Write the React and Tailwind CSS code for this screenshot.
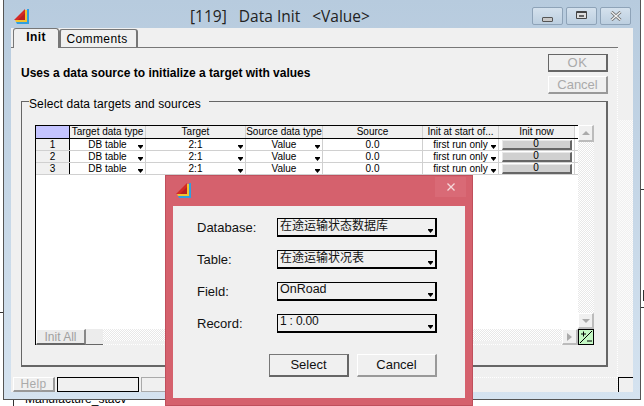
import React from 'react';

const COLS = [
  { title: 'Target data type', w: 'w-[76px]' },
  { title: 'Target', w: 'w-[100px]' },
  { title: 'Source data type', w: 'w-[77px]' },
  { title: 'Source', w: 'w-[100px]' },
  { title: 'Init at start of...', w: 'w-[76px]' },
  { title: 'Init now', w: 'w-[76px]' },
];

const ROWS = ['1', '2', '3'];

const FIELDS = [
  { label: 'Database:', value: '在途运输状态数据库', size: 'text-[12px] leading-[15px]' },
  { label: 'Table:', value: '在途运输状况表', size: 'text-[12px] leading-[15px]' },
  { label: 'Field:', value: 'OnRoad', size: 'text-[12.5px] leading-[12px]' },
  { label: 'Record:', value: '1 : 0.00', size: 'text-[12px] leading-[12px] tracking-[-0.2px]' },
];

const HATCH = 'bg-[repeating-conic-gradient(#e8e8e8_0_25%,#ffffff_0_50%)] bg-[length:2px_2px]';
const HATCH_LIGHT = 'bg-[repeating-conic-gradient(#f0f0f0_0_25%,#fbfbfb_0_50%)] bg-[length:2px_2px]';

const AppIcon = ({ className }) => (
  <svg viewBox="0 0 16 16" className={className}>
    <path d="M13 0h2v15H3l-1-2h11z" fill="#2f9fe0" />
    <path d="M11 1h2v12H2l-1-2h10z" fill="#f2c230" />
    <path d="M11 0v11H0z" fill="#d42a24" />
    <path d="M11 4v7H4z" fill="#b81f1f" />
  </svg>
);

const ArrowDown = ({ className = 'right-[2px] bottom-[1px]' }) => (
  <svg viewBox="0 0 5 4" className={`absolute w-[5px] h-[4px] ${className}`}>
    <path d="M0 0h5v1L2.5 4 0 1z" fill="#000" />
  </svg>
);

const Cell = ({ className = '', children, arrow }) => (
  <div className={`relative h-full flex items-center justify-center border-r border-[#d0d0d0] ${className}`}>
    {children}
    {arrow && <ArrowDown />}
  </div>
);

const DataGrid = () => (
  <div className="flex-1 min-w-0 bg-white border-l border-t border-black">
    <div className="flex h-[13px] border-b border-black">
      <div className="w-[34px] bg-[#c4c4ff] border-r border-black" />
      {COLS.map(c => (
        <div key={c.title} className={`${c.w} shrink-0 bg-[#f0f0f0] border-r border-[#d0d0d0] flex items-center justify-center whitespace-nowrap`}>
          {c.title}
        </div>
      ))}
    </div>
    {ROWS.map(r => (
      <div key={r} className="flex h-[12px] border-b border-[#d0d0d0]">
        <div className="w-[34px] bg-[#f0f0f0] border-r border-black flex items-center justify-center">{r}</div>
        <Cell className="w-[76px]" arrow>DB table</Cell>
        <Cell className="w-[100px]" arrow>2:1</Cell>
        <Cell className="w-[77px]" arrow>Value</Cell>
        <Cell className="w-[100px]">0.0</Cell>
        <Cell className="w-[76px]" arrow>first run only</Cell>
        <Cell className="w-[76px]">
          <div className="w-[70px] h-[10px] bg-[#d0d0d0] border-t border-l border-[#e8e8e8] border-r-2 border-b-2 border-r-[#666] border-b-[#666] flex items-center justify-center leading-none pb-[1px]">0</div>
        </Cell>
      </div>
    ))}
  </div>
);

const ScrollBtn = ({ dir, className = '' }) => (
  <div className={`bg-[#f0f0f0] border-t border-l border-white border-r-2 border-b-2 border-r-[#bbb] border-b-[#bbb] flex items-center justify-center shrink-0 ${className}`}>
    <svg viewBox="0 0 8 8" className="w-[8px] h-[8px]">
      {dir === 'up' && <path d="M0 6h8L4 2z" fill="#aaa" />}
      {dir === 'down' && <path d="M0 2h8L4 6z" fill="#aaa" />}
      {dir === 'right' && <path d="M1 0v8l5-4z" fill="#aaa" />}
    </svg>
  </div>
);

const GridBlock = () => (
  <div className="flex flex-col w-[559px] h-[220px] text-[10px] leading-none text-black">
    <div className="flex flex-1 min-h-0">
      <div className="flex-1 min-w-0 flex bg-white">
        <DataGrid />
      </div>
      <div className="w-[16px] flex flex-col">
        <ScrollBtn dir="up" className="h-[17px]" />
        <div className={`flex-1 ${HATCH}`} />
        <ScrollBtn dir="down" className="h-[16px]" />
      </div>
    </div>
    <div className="flex h-[16px]">
      <div className="flex-1 min-w-0 flex border-l border-black">
        <div className="w-[50px] bg-[#ececec] border-t border-l border-white border-r-2 border-b-2 border-r-[#888] border-b-[#666] flex items-center justify-center text-[12px] text-[#a0a0a0]">Init All</div>
        <div className="w-[17px] bg-[#ececec] border-b border-[#666]" />
        <div className="flex-1 flex flex-col">
          <div className={`h-[12px] ${HATCH}`} />
          <div className="flex-1 border-b border-dotted border-white" />
        </div>
        <ScrollBtn dir="right" className="w-[16px]" />
      </div>
      <div className="w-[16px] h-[16px] bg-[#c4f8c4] border border-black">
        <svg viewBox="0 0 14 14" className="w-[14px] h-[14px]">
          <path d="M1 13L13 1" stroke="#000" fill="none" />
          <path d="M2 4h5M4.5 1.5v5M8 11h5" stroke="#000" fill="none" />
        </svg>
      </div>
    </div>
  </div>
);

const Combo = ({ value, size }) => (
  <div className={`relative w-[160px] h-[19px] bg-[#f0f0f0] border-t border-l border-black border-r-2 border-b-2 pl-[2px] text-[#111] whitespace-nowrap ${size}`}>
    {value}
    <ArrowDown className="right-[2px] bottom-[2px]" />
  </div>
);

const DialogBox = () => (
  <div className="absolute left-[165px] top-[175px] w-[308px] h-[231px] bg-[#d5616d] border border-[#c04f5c] flex flex-col font-['Liberation_Sans','Noto_Sans_CJK_SC',sans-serif]">
    <div className="h-[30px] shrink-0 flex justify-between pl-[10px]">
      <AppIcon className="w-[16px] h-[16px] mt-[7px]" />
      <div className="w-[31px] h-[20px] mt-[1px] mr-[6px] bg-[#d96a76] flex items-center justify-center">
        <svg viewBox="0 0 8 8" className="w-[8px] h-[8px]">
          <path d="M0.5 0.5l7 7M7.5 0.5l-7 7" stroke="#f6d8da" strokeWidth="1.3" fill="none" />
        </svg>
      </div>
    </div>
    <div className="mx-[7px] h-[192px] bg-[#f0f0f0] pt-[12px] pl-[24px] flex flex-col text-[13px] text-[#111]">
      <div className="flex flex-col gap-[13px]">
        {FIELDS.map(f => (
          <div key={f.label} className="flex items-center h-[19px]">
            <span className="w-[80px]">{f.label}</span>
            <Combo value={f.value} size={f.size} />
          </div>
        ))}
      </div>
      <div className="flex gap-[8px] mt-[21px] ml-[72px]">
        <button className="w-[80px] h-[23px] bg-[#f0f0f0] border-t border-l border-[#777] border-r-2 border-b-2 border-r-[#666] border-b-[#666] text-[13px]">Select</button>
        <button className="w-[80px] h-[23px] bg-[#f0f0f0] border-t border-l border-white border-r-2 border-b-2 border-r-[#999] border-b-[#999] text-[13px]">Cancel</button>
      </div>
    </div>
  </div>
);

const MainWindow = () => (
  <div className="absolute left-[3px] top-0 w-[638px] h-[400px] bg-gradient-to-b from-[#b7cbde] to-[#d5e3f0] border-x border-b border-[#555] flex flex-col font-['Liberation_Sans',sans-serif]">
    <div className="h-[28px] shrink-0 relative flex items-center justify-center">
      <AppIcon className="absolute left-[10px] top-[9px] w-[16px] h-[16px]" />
      <span className="font-['Open_Sans',sans-serif] text-[15.5px] text-[#222] whitespace-pre pr-[84px] pt-[6px]">[119]   Data Init   &lt;Value&gt;</span>
      <div className="absolute right-[9px] top-[7px] flex gap-[3px]">
        {['min', 'max', 'close'].map(b => (
          <div key={b} className="w-[31px] h-[18px] border border-[#8ea3b8] rounded-[2px] bg-gradient-to-b from-[#d4e1ed] to-[#bccfe0] flex items-center justify-center">
            {b === 'min' && <div className="w-[11px] h-[5px] mt-[6px] border border-[#555] rounded-[1px] bg-[#c8c8c8]" />}
            {b === 'max' && (
              <div className="w-[11px] h-[8px] mb-[2px] border border-t-2 border-[#444] rounded-[1px] bg-[#ddd] flex items-center justify-center">
                <div className="w-[5px] h-[2px] bg-[#666]" />
              </div>
            )}
            {b === 'close' && (
              <svg viewBox="0 0 12 10" className="w-[12px] h-[10px]">
                <path d="M1.5 1l9 8M10.5 1l-9 8" stroke="#666" strokeWidth="3" fill="none" />
                <path d="M1.5 1l9 8M10.5 1l-9 8" stroke="#f0f0f0" strokeWidth="1.5" fill="none" />
              </svg>
            )}
          </div>
        ))}
      </div>
    </div>

    <div className="mx-[7px] h-[364px] bg-[#f0f0f0] flex flex-col">
      <div className="flex items-end h-[20px] w-[607px] pl-[2px] border-b border-[#777] text-[12px] tracking-[0.4px] text-black">
        <div className="w-[46px] h-[20px] -mb-[1px] bg-[#f0f0f0] border border-b-0 border-[#777] rounded-t-[3px] font-bold flex items-center justify-center pb-[3px]">Init</div>
        <div className="w-[79px] h-[18px] bg-[#f0f0f0] border-x-2 border-t border-[#777] rounded-t-[3px] flex items-center justify-center pr-[3px]">Comments</div>
      </div>

      <div className="flex-1 min-h-0 flex">
        <div className="w-[607px] pl-[10px] flex flex-col border-r border-dotted border-white">
          <div className="h-[53px] flex justify-between pr-[9px]">
            <p className="mt-[16px] font-bold text-[12px] text-black">Uses a data source to initialize a target with values</p>
            <div className="mt-[6px] flex flex-col gap-[4px] text-[13px] text-[#aaa]">
              <div className="w-[60px] h-[18px] border border-[#666] border-r-2 border-b-2 flex items-center justify-center tracking-[0.5px]">OK</div>
              <div className="w-[60px] h-[18px] border-t border-l border-white border-r-2 border-b-2 border-r-[#999] border-b-[#999] flex items-center justify-center">Cancel</div>
            </div>
          </div>

          <div className="relative w-[587px] h-[266px] border-2 border-t border-l border-[#666] pl-[13px] pt-[23px]">
            <span className="absolute left-[7px] -top-[5px] pr-[8px] bg-[#f0f0f0] text-[12px] leading-[14px] tracking-[0.1px] text-black">Select data targets and sources</span>
            <GridBlock />
          </div>

          <div className="flex gap-[2px] mt-[10px] -ml-[8px] h-[15px]">
            <div className="w-[42px] border-t border-l border-white border-r-2 border-b-2 border-r-[#999] border-b-[#999] flex items-center justify-center text-[12px] text-[#aaa] tracking-[0.3px]">Help</div>
            <div className="w-[82px] border border-black" />
            <div className="w-[100px] border border-[#aaa]" />
            <div className="flex-1 border-t border-dotted border-white" />
          </div>
        </div>
        <div className="flex-1 flex flex-col">
          <div className="h-[72px]" />
          <div className={`h-[220px] ${HATCH_LIGHT}`} />
          <div className="flex-1" />
          <div className="h-[15px] border-l border-t border-black" />
        </div>
      </div>
    </div>
  </div>
);

export default function App() {
  return (
    <div className="relative w-[644px] h-[406px] overflow-hidden bg-white">
      <div className="absolute left-[25px] top-[392px] text-[12px] leading-[14px] text-black font-['Liberation_Sans',sans-serif]">Manufacture_stacv</div>
      <div className="absolute left-[13px] top-[400px] w-px h-[6px] bg-[#333]" />
      <div className="absolute left-0 top-[312px] w-[3px] h-px bg-[#333]" />
      <div className="absolute right-0 top-[189px] w-[3px] h-px bg-[#333]" />
      <div className="absolute right-0 top-[307px] w-[3px] h-px bg-[#333]" />
      <div className="absolute right-0 top-[290px] w-[1px] h-[11px] bg-[#333]" />
      <MainWindow />
      <DialogBox />
    </div>
  );
}
